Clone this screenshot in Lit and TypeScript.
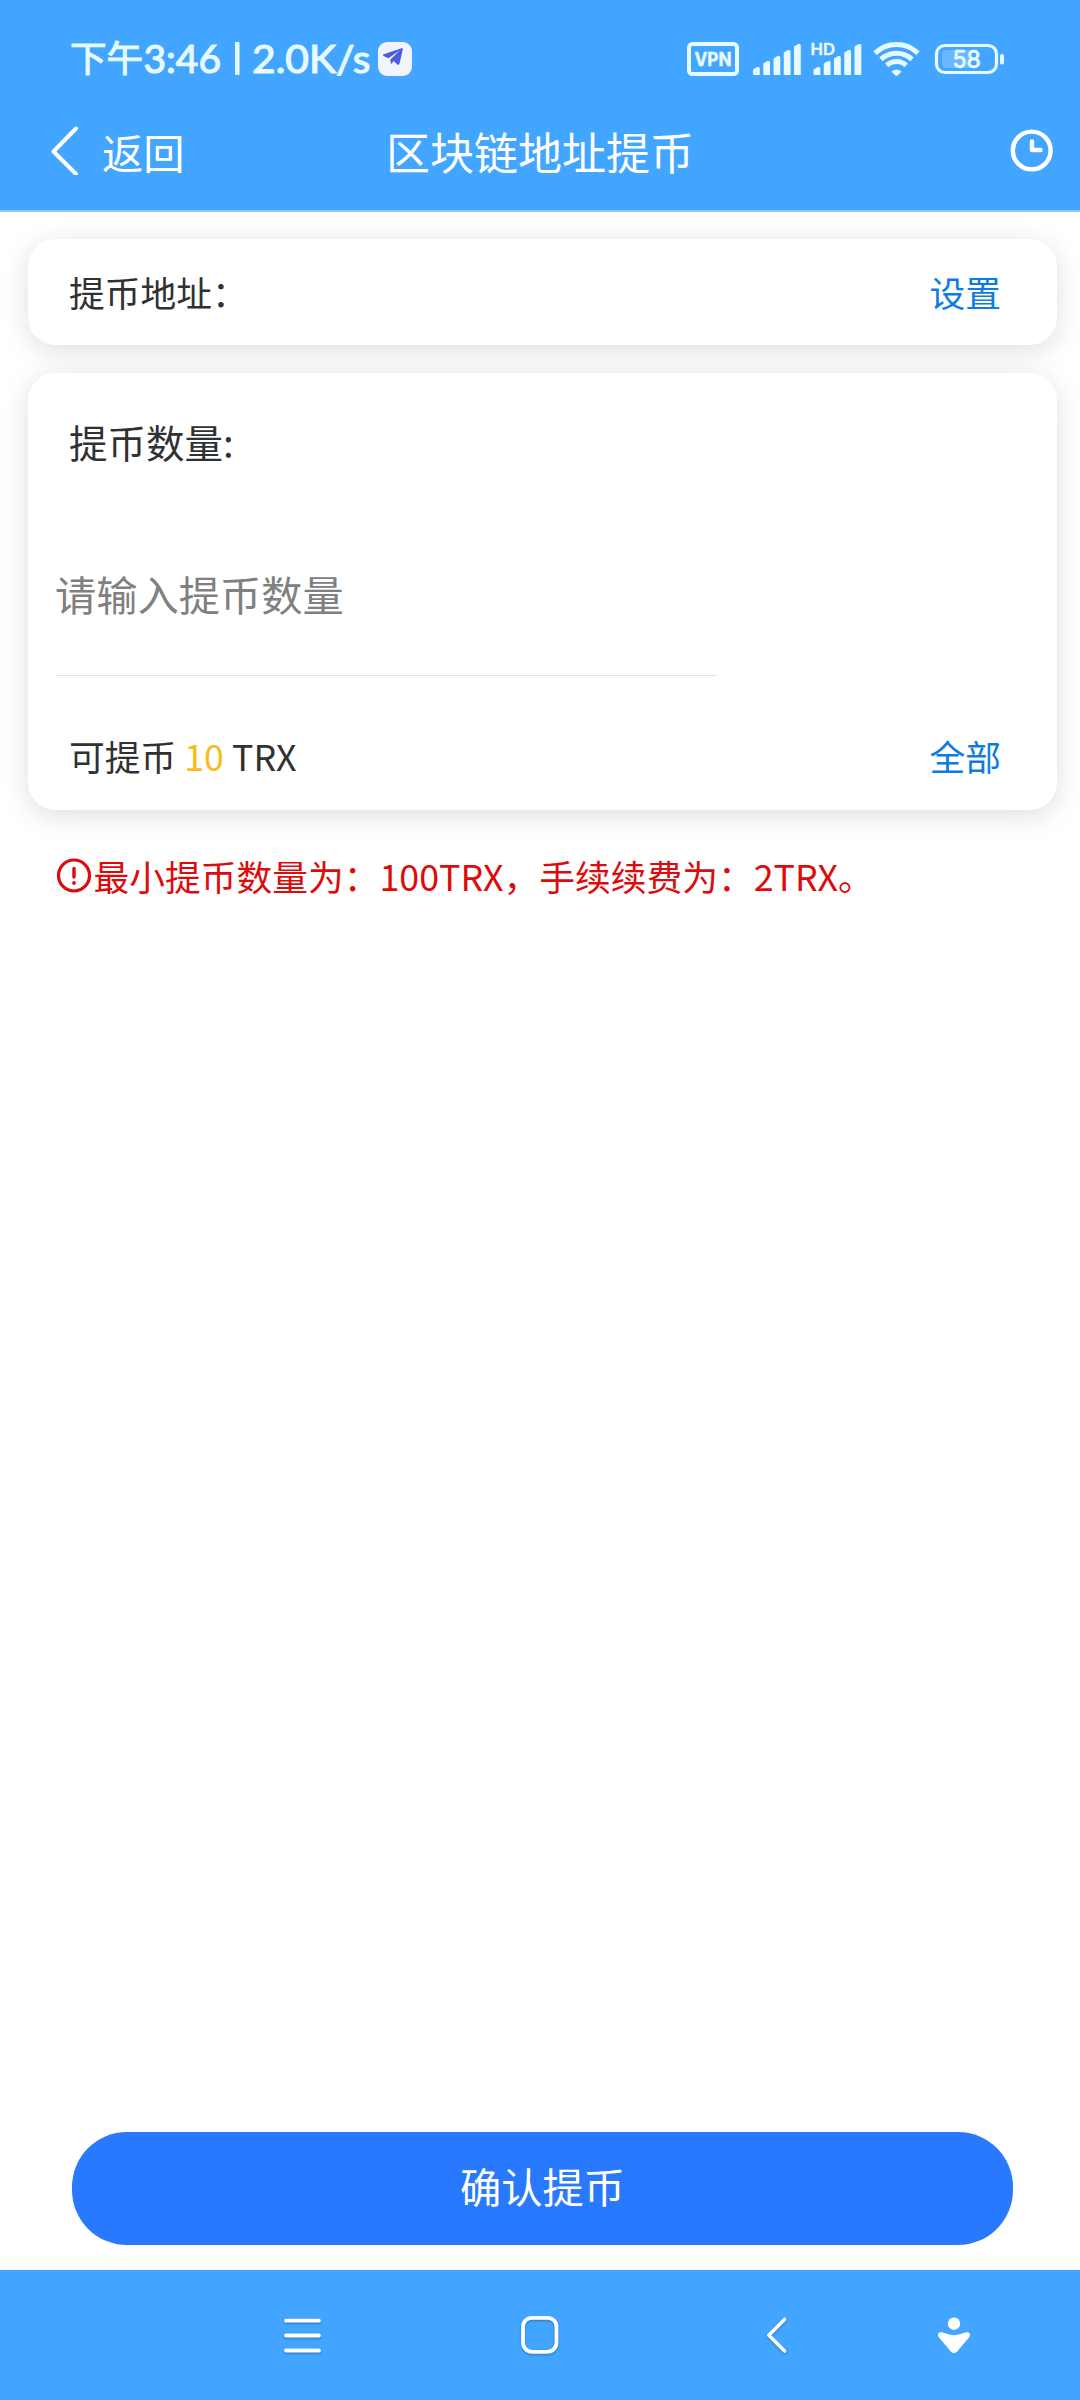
import { LitElement, html, css, svg } from "lit";
import { customElement, property } from "lit/decorators.js";

const family = css`"Noto Sans CJK SC", "Noto Sans", sans-serif`;

/** One signal meter: five bars with a cut upper-left corner. */
const signalBars = (x: number) =>
  [8, 14, 19, 25, 31].map((h, i) => {
    const l = x + i * 10.25;
    const t = 33 - h;
    return svg`<path d="M${l} ${t + 2.6}L${l + 4.2} ${t}H${l + 5.6}Q${l + 6.8} ${t} ${l + 6.8} ${t + 1.5}V33H${l + 1}Q${l} 33 ${l} 32Z"/>`;
  });

@customElement("status-bar")
class StatusBar extends LitElement {
  static styles = css`
    :host {
      display: flex;
      align-items: center;
      height: 90px;
      padding: 28px 75px 0 70px;
      box-sizing: border-box;
      color: #e6faff;
      font-family: ${family};
    }
    svg {
      display: block;
      flex: none;
      overflow: visible;
    }
    .spacer {
      flex: 1;
    }
    .vpn {
      margin-right: 14px;
    }
    .signal {
      margin-right: 11px;
    }
    .wifi {
      margin-right: 15px;
    }
  `;

  render() {
    return html`
      <svg width="306" height="62" viewBox="0 0 306 62" fill="#e6faff" stroke="#e6faff">
        <text x="0" y="44" font-size="36.5" textLength="73" stroke-width="1.100">下午</text>
        <g font-family="Lato, sans-serif" font-size="39.5" stroke-width="1.200">
          <text x="73.5" y="45" textLength="77.5" lengthAdjust="spacingAndGlyphs">3:46</text>
          <text x="182" y="45" textLength="118.5" lengthAdjust="spacingAndGlyphs">2.0K/s</text>
        </g>
        <rect x="165" y="14" width="4.5" height="33" rx="1" stroke="none" />
      </svg>
      <svg width="38" height="34" viewBox="376 42 38 34">
        <rect x="378" y="42" width="34" height="34" rx="9" fill="#f1f4fd" />
        <path d="M383.2 54.4 401.4 48.2Q403.2 47.8 402.8 49.6L399.6 63.2Q399 65.600 397.2 64.2L393.6 61 391.2 64.2 390.2 59.8 399.6 50.6 388.4 58.2 383.6 56Q382.4 55 383.2 54.4Z" fill="#4a5ce0" />
      </svg>
      <div class="spacer"></div>
      <svg class="vpn" width="52" height="34" viewBox="0 0 52 34">
        <rect x="2" y="2" width="48" height="30" rx="3.5" fill="none" stroke="#e6faff" stroke-width="4" />
        <text x="7.5" y="24" font-family="Inter, sans-serif" font-weight="700" font-size="19" fill="#e6faff" stroke="#e6faff" stroke-width="0.5" textLength="37" lengthAdjust="spacingAndGlyphs">VPN</text>
      </svg>
      <svg class="signal" width="109" height="34" viewBox="0 0 109 34" fill="#e6faff">
        ${signalBars(0)} ${signalBars(60.5)}
        <text x="57.5" y="13" font-family="Inter, sans-serif" font-weight="600" font-size="16.5" stroke="#e6faff" stroke-width="0.400" textLength="24.5" lengthAdjust="spacingAndGlyphs">HD</text>
      </svg>
      <svg class="wifi" width="47" height="34" viewBox="0 0 47 34">
        <g fill="none" stroke="#e6faff" stroke-width="5">
          <path d="M2 11.200A31 31 0 0 1 45 11.200" />
          <path d="M8 17.400A22.500 22.500 0 0 1 39 17.400" />
          <path d="M13.800 23.300A14.200 14.200 0 0 1 33.200 23.300" />
        </g>
        <path d="M18.500 29.500Q23.500 25.500 28.500 29.500L24.700 33.500Q23.500 34.400 22.300 33.500Z" fill="#e6faff" />
      </svg>
      <svg width="70" height="34" viewBox="0 0 70 34">
        <rect x="1.500" y="3.500" width="60" height="27" rx="8.500" fill="none" stroke="#e6faff" stroke-width="3.200" />
        <path d="M12 8H36V26H12Q7 26 7 21.500V12.500Q7 8 12 8Z" fill="#6ab8ff" />
        <rect x="65" y="12" width="4" height="10.500" rx="1.800" fill="#e6faff" />
        <text x="17.500" y="26" font-family="Inter, sans-serif" font-size="24.500" font-weight="500" fill="#e6faff" stroke="#e6faff" stroke-width="0.500" textLength="28.500" lengthAdjust="spacingAndGlyphs">58</text>
      </svg>
    `;
  }
}

@customElement("title-bar")
class TitleBar extends LitElement {
  @property() heading = "";

  static styles = css`
    :host {
      display: grid;
      grid-template-columns: 1fr auto 1fr;
      align-items: center;
      height: 120px;
      padding: 0 24px;
      box-sizing: border-box;
      color: #fff;
      font-family: ${family};
    }
    .back {
      display: flex;
      align-items: center;
      gap: 23px;
      padding-left: 27px;
      font-size: 41.25px;
      line-height: 60px;
    }
    .back span,
    .title {
      padding-top: 2px;
    }
    .title {
      font-size: 44px;
      line-height: 64px;
    }
    .history {
      justify-self: end;
    }
    svg {
      display: block;
    }
  `;

  render() {
    return html`
      <div class="back">
        <svg width="28" height="50" viewBox="0 0 28 50" fill="none" stroke="#fff" stroke-width="4" stroke-linecap="round" stroke-linejoin="round">
          <path d="M25 3.500 2.500 26.500 25 49" />
        </svg>
        <span>返回</span>
      </div>
      <div class="title">${this.heading}</div>
      <svg class="history" width="48" height="44" viewBox="0 0 48 44" fill="none" stroke="#fff" stroke-width="4.400">
        <circle cx="23.700" cy="22.500" r="18.900" />
        <path d="M24 13.500V22H32.500" stroke-linecap="round" stroke-linejoin="round" />
      </svg>
    `;
  }
}

@customElement("system-nav")
class SystemNav extends LitElement {
  static styles = css`
    :host {
      display: flex;
      align-items: center;
      height: 130px;
      padding-left: 282px;
      box-sizing: border-box;
      background: #42a5ff;
    }
    svg {
      display: block;
      overflow: visible;
    }
    .shaded {
      filter: drop-shadow(0 1px 1px rgba(0, 0, 0, 0.3));
    }
    .menu {
      margin-right: 197px;
    }
    .home {
      margin-right: 204px;
    }
    .return {
      margin-right: 149px;
    }
  `;

  render() {
    return html`
      <svg class="menu shaded" width="41" height="40" viewBox="0 0 41 40" fill="none" stroke="#fff" stroke-width="3.800" stroke-linecap="round">
        <path d="M4 5.700H37M4 20.500H37M4 35.500H37" />
      </svg>
      <svg class="home shaded" width="40" height="40" viewBox="0 0 40 40" fill="none" stroke="#fff" stroke-width="3.800">
        <rect x="3" y="2.800" width="33.500" height="34" rx="9" />
      </svg>
      <svg class="return shaded" width="24" height="40" viewBox="0 0 24 40" fill="none" stroke="#fff" stroke-width="3.600" stroke-linecap="round" stroke-linejoin="round">
        <path d="M20.500 4.500 4.800 20.200 20.500 36" />
      </svg>
      <svg width="34" height="40" viewBox="0 0 34 40" fill="#fff">
        <circle cx="17" cy="8.700" r="6.200" />
        <path d="M4.500 17.200C8.500 17.800 12 20.200 17 20.200S25.500 17.800 29.500 17.200C32.600 16.800 34 19.600 32.300 22L20 36.800Q17 39.200 14 36.800L1.700 22C0 19.600 1.400 16.800 4.500 17.200Z" />
      </svg>
    `;
  }
}

@customElement("app-root")
class AppRoot extends LitElement {
  static styles = css`
    :host {
      display: flex;
      flex-direction: column;
      width: 1080px;
      height: 2400px;
      overflow: hidden;
      background: #fff;
      color: #303133;
      font-family: ${family};
      font-size: 35.75px;
      line-height: 52px;
    }
    .header {
      flex: none;
      background: #42a5ff;
      border-bottom: 2px solid #8ec8fb;
    }
    .content {
      flex: 1;
      display: flex;
      flex-direction: column;
      padding: 27px 23px 25px 28px;
    }
    .card {
      display: flex;
      flex-direction: column;
      box-sizing: border-box;
      background: #fff;
      border-radius: 27.5px;
      box-shadow: 0 5.5px 27.5px rgba(0, 0, 0, 0.13);
    }
    .address {
      height: 106px;
      justify-content: center;
      margin-bottom: 28px;
    }
    .amount {
      height: 437px;
      padding-top: 40px;
    }
    .row {
      display: flex;
      justify-content: space-between;
      padding: 0 56px 0 41px;
    }
    .label {
      padding-left: 41px;
      font-size: 38.5px;
      line-height: 56px;
    }
    .input {
      width: 662px;
      height: 162px;
      margin: 45px 0 54px 27px;
      box-sizing: border-box;
      border: 0;
      border-bottom: 1px solid #e2e3e5;
      padding: 0 0 4px;
      outline: 0;
      background: none;
      font: 41.25px/60px ${family};
      color: #303133;
    }
    .input::placeholder {
      color: #808080;
      opacity: 1;
    }
    .link {
      color: #0c7ce2;
    }
    .value {
      color: #f7bd1c;
    }
    .notice {
      display: flex;
      align-items: center;
      gap: 1.5px;
      padding: 40px 0 0 28px;
      color: #dd0b0b;
      white-space: nowrap;
    }
    .notice svg {
      display: block;
      flex: none;
    }
    .submit {
      width: 941px;
      height: 113px;
      margin: auto 0 0 44px;
      border: 0;
      border-radius: 55px;
      padding: 0 0 7px;
      background: #2979ff;
      color: #fff;
      font: 41.25px/60px ${family};
    }
  `;

  render() {
    return html`
      <div class="header">
        <status-bar></status-bar>
        <title-bar heading="区块链地址提币"></title-bar>
      </div>
      <div class="content">
        <div class="card address">
          <div class="row"><span>提币地址：</span><span class="link">设置</span></div>
        </div>
        <div class="card amount">
          <div class="label">提币数量:</div>
          <input class="input" placeholder="请输入提币数量" />
          <div class="row">
            <span>可提币 <span class="value">10</span> TRX</span>
            <span class="link">全部</span>
          </div>
        </div>
        <div class="notice">
          <svg width="36" height="36" viewBox="0 0 36 36" fill="none" stroke="#dd0b0b">
            <circle cx="18" cy="17.500" r="15.500" stroke-width="3.200" />
            <path d="M18 10.500V19" stroke-width="3.400" stroke-linecap="round" />
            <circle cx="18" cy="25" r="1.900" fill="#dd0b0b" stroke="none" />
          </svg>
          <span>最小提币数量为：100TRX，手续续费为：2TRX。</span>
        </div>
        <button class="submit">确认提币</button>
      </div>
      <system-nav></system-nav>
    `;
  }
}
